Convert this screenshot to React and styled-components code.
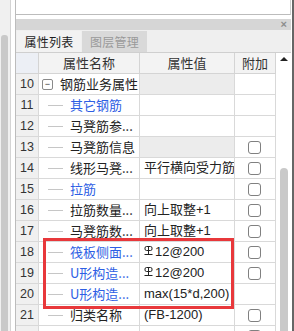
import React from "react";
import styled, { createGlobalStyle } from "styled-components";

const GlobalStyle = createGlobalStyle`
  html, body {
    margin: 0;
    padding: 0;
    background: #fff;
  }
  body {
    font-family: "Noto Sans CJK SC", "Liberation Sans", sans-serif;
    font-size: 13px;
    color: #222;
    overflow: hidden;
  }
`;

const rows = [
  { no: 10, name: "钢筋业务属性", group: true, grey: true },
  { no: 11, name: "其它钢筋", blue: true },
  { no: 12, name: "马凳筋参..." },
  { no: 13, name: "马凳筋信息", grey: true, check: true },
  { no: 14, name: "线形马凳...", value: "平行横向受力筋", check: true },
  { no: 15, name: "拉筋", blue: true, check: true },
  { no: 16, name: "拉筋数量...", value: "向上取整+1", check: true },
  { no: 17, name: "马凳筋数...", value: "向上取整+1", check: true },
  { no: 18, name: "筏板侧面...", blue: true, value: "12@200", rebar: true, check: true },
  { no: 19, name: "U形构造...", blue: true, value: "12@200", rebar: true, check: true },
  { no: 20, name: "U形构造...", blue: true, value: "max(15*d,200)" },
  { no: 21, name: "归类名称", value: "(FB-1200)", check: true },
  { no: 22, name: "", check: true, blank: true },
];

const ROW_H = 21;

export default function App() {
  return (
    <>
      <GlobalStyle />
      <Page>
        <SideStrip>
          <SideThumb />
        </SideStrip>
        <Main>
          <TopBox />
          <Panel>
            <TitleBar>
              <Close>×</Close>
            </TitleBar>
            <TabBar>
              <Tab active>属性列表</Tab>
              <Tab>图层管理</Tab>
            </TabBar>
            <Body>
              <Table>
                <HeadRow>
                  <HeadCell first />
                  <HeadCell>属性名称</HeadCell>
                  <HeadCell>属性值</HeadCell>
                  <HeadCell>附加</HeadCell>
                </HeadRow>
                <Rows>
                  {rows.map((r) => (
                    <Row key={r.no}>
                      <NumCell>{r.blank ? "" : r.no}</NumCell>
                      <NameCell>
                        {r.group ? <Expander>−</Expander> : <TreeLine />}
                        <Label blue={r.blue}>{r.name}</Label>
                      </NameCell>
                      <ValueCell grey={r.grey}>
                        {r.rebar && <RebarMark />}
                        {r.value}
                      </ValueCell>
                      <ExtraCell>{r.check && <CheckBox />}</ExtraCell>
                    </Row>
                  ))}
                  <Highlight style={{ top: 8 * ROW_H - 4, height: 3 * ROW_H + 8 }} />
                </Rows>
              </Table>
              <ScrollBar>
                <UpArrow />
                <ScrollThumb />
              </ScrollBar>
            </Body>
          </Panel>
        </Main>
        <Edge />
      </Page>
    </>
  );
}

function RebarMark() {
  return (
    <Mark width="9" height="9" viewBox="0 0 9 9">
      <rect x="1" y="0.5" width="7" height="4" rx="1.5" fill="none" stroke="#222" />
      <line x1="4.5" y1="0" x2="4.5" y2="8.5" stroke="#222" />
      <line x1="0.5" y1="8.5" x2="8.5" y2="8.5" stroke="#222" />
    </Mark>
  );
}

const Page = styled.div`
  display: flex;
  width: 294px;
  height: 331px;
  overflow: hidden;
`;

const SideStrip = styled.div`
  box-sizing: border-box;
  width: 11px;
  background: #f0f0f0;
  border-right: 1px solid #d4d4d4;
  padding: 35px 0 0 1px;
  margin-right: 4px;
  display: flex;
  flex-direction: column;
`;

const SideThumb = styled.div`
  flex: 1;
  width: 7px;
  background: #c9c9c9;
  border-radius: 3px 3px 0 0;
`;

const Main = styled.div`
  box-sizing: border-box;
  width: 276px;
  border-left: 1px solid #bcbcbc;
  display: flex;
  flex-direction: column;
`;

const Edge = styled.div`
  width: 2px;
  margin-left: 1px;
  background: #666;
`;

const TopBox = styled.div`
  box-sizing: border-box;
  height: 15px;
  border-bottom: 1px solid #bcbcbc;
  border-right: 1px solid #cfcfcf;
`;

const Panel = styled.div`
  margin-top: 4px;
  flex: 1;
  display: flex;
  flex-direction: column;
  min-height: 0;
`;

const TitleBar = styled.div`
  height: 11px;
  background: #d6d6d6;
  display: flex;
  justify-content: flex-end;
  align-items: center;
  padding-right: 4px;
`;

const Close = styled.span`
  font-family: "Liberation Sans", sans-serif;
  font-size: 11px;
  font-weight: bold;
  line-height: 11px;
  color: #8c8c8c;
`;

const TabBar = styled.div`
  box-sizing: border-box;
  height: 23px;
  background: #efefef;
  border-bottom: 1px solid #cfcfcf;
  display: flex;
  align-items: flex-end;
  padding-left: 1px;
  gap: 1px;
`;

const Tab = styled.div`
  box-sizing: border-box;
  height: 21px;
  width: ${(p) => (p.active ? "64px" : "65px")};
  background: ${(p) => (p.active ? "#f2f2f2" : "#d9d9d9")};
  color: ${(p) => (p.active ? "#1e1e1e" : "#9a9a9a")};
  font-size: 12px;
  line-height: 21px;
  text-align: center;
  letter-spacing: 0.3px;
`;

const Body = styled.div`
  flex: 1;
  display: flex;
  min-height: 0;
`;

const Table = styled.div`
  width: 260px;
  display: flex;
  flex-direction: column;
`;

const grid = `
  display: grid;
  grid-template-columns: 23px 101px 95px 41px;
  height: ${ROW_H}px;
`;

const HeadRow = styled.div`
  ${grid}
`;

const HeadCell = styled.div`
  box-sizing: border-box;
  background: ${(p) => (p.first ? "#eceff5" : "#f3f3f3")};
  border-right: 1px solid #d4d4d4;
  border-bottom: 1px solid #d4d4d4;
  color: #333;
  font-size: 13px;
  line-height: 20px;
  text-align: center;
`;

const Rows = styled.div`
  position: relative;
`;

const Row = styled.div`
  ${grid}
`;

const Cell = styled.div`
  box-sizing: border-box;
  border-right: 1px solid #d9d9d9;
  border-bottom: 1px solid #d9d9d9;
  display: flex;
  align-items: center;
  white-space: nowrap;
  overflow: hidden;
  line-height: 20px;
`;

const NumCell = styled(Cell)`
  background: #f0f0f0;
  justify-content: center;
  font-family: "Liberation Sans", sans-serif;
  font-size: 12.5px;
  color: #333;
`;

const NameCell = styled(Cell)`
  padding-left: 3px;
`;

const Expander = styled.span`
  box-sizing: border-box;
  width: 11px;
  height: 11px;
  border: 1px solid #8a8a8a;
  border-radius: 2px;
  display: flex;
  align-items: center;
  justify-content: center;
  font-family: "Liberation Sans", sans-serif;
  font-size: 9px;
  line-height: 9px;
  color: #333;
  margin-right: 7px;
`;

const TreeLine = styled.span`
  width: 15px;
  height: 1px;
  background: #c6c6c6;
  margin: 0 7px 0 6px;
`;

const Label = styled.span`
  color: ${(p) => (p.blue ? "#2d5ee4" : "#222")};
  font-size: 13px;
`;

const ValueCell = styled(Cell)`
  background: ${(p) => (p.grey ? "#ececec" : "#fff")};
  padding-left: 4px;
  font-family: "Liberation Sans", "Noto Sans CJK SC", sans-serif;
  font-size: 13px;
  color: #222;
`;

const Mark = styled.svg`
  align-self: flex-start;
  margin-top: 4px;
  margin-right: 2px;
  flex: none;
`;

const ExtraCell = styled(Cell)`
  justify-content: center;
`;

const CheckBox = styled.span`
  box-sizing: border-box;
  width: 13px;
  height: 13px;
  border: 1px solid #808080;
  border-radius: 3px;
  background: #fff;
  margin-left: -1px;
`;

const Highlight = styled.div`
  position: absolute;
  left: 27px;
  width: 191px;
  box-sizing: border-box;
  border: 3px solid #e8383b;
  pointer-events: none;
`;

const ScrollBar = styled.div`
  width: 15px;
  background: #fff;
  display: flex;
  flex-direction: column;
  align-items: center;
  padding-top: 4px;
  box-sizing: border-box;
`;

const UpArrow = styled.span`
  width: 0;
  height: 0;
  border-left: 4px solid transparent;
  border-right: 4px solid transparent;
  border-bottom: 4px solid #222;
`;

const ScrollThumb = styled.div`
  margin-top: 107px;
  flex: 1;
  width: 8px;
  background: #c9c9c9;
  border-radius: 4px 4px 0 0;
`;
